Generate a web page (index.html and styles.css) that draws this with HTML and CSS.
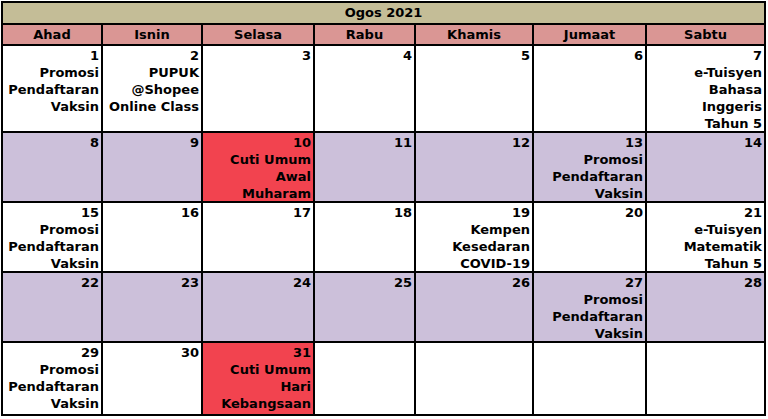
FILE: index.html
```html
<!DOCTYPE html>
<html>
<head>
<meta charset="utf-8">
<link rel="stylesheet" href="styles.css">
</head>
<body>
<div class="cal">
  <div class="title">Ogos 2021</div>
  <div class="hd">Ahad</div>
  <div class="hd">Isnin</div>
  <div class="hd">Selasa</div>
  <div class="hd">Rabu</div>
  <div class="hd">Khamis</div>
  <div class="hd">Jumaat</div>
  <div class="hd">Sabtu</div>

  <div class="c">1<br>Promosi<br>Pendaftaran<br>Vaksin</div>
  <div class="c">2<br>PUPUK<br>@Shopee<br>Online Class</div>
  <div class="c">3</div>
  <div class="c">4</div>
  <div class="c">5</div>
  <div class="c">6</div>
  <div class="c">7<br>e-Tuisyen<br>Bahasa<br>Inggeris<br>Tahun 5</div>

  <div class="c p">8</div>
  <div class="c p">9</div>
  <div class="c r">10<br>Cuti Umum<br>Awal<br>Muharam</div>
  <div class="c p">11</div>
  <div class="c p">12</div>
  <div class="c p">13<br>Promosi<br>Pendaftaran<br>Vaksin</div>
  <div class="c p">14</div>

  <div class="c">15<br>Promosi<br>Pendaftaran<br>Vaksin</div>
  <div class="c">16</div>
  <div class="c">17</div>
  <div class="c">18</div>
  <div class="c">19<br>Kempen<br>Kesedaran<br>COVID-19</div>
  <div class="c">20</div>
  <div class="c">21<br>e-Tuisyen<br>Matematik<br>Tahun 5</div>

  <div class="c p">22</div>
  <div class="c p">23</div>
  <div class="c p">24</div>
  <div class="c p">25</div>
  <div class="c p">26</div>
  <div class="c p">27<br>Promosi<br>Pendaftaran<br>Vaksin</div>
  <div class="c p">28</div>

  <div class="c">29<br>Promosi<br>Pendaftaran<br>Vaksin</div>
  <div class="c">30</div>
  <div class="c r">31<br>Cuti Umum<br>Hari<br>Kebangsaan</div>
  <div class="c"></div>
  <div class="c"></div>
  <div class="c"></div>
  <div class="c"></div>
</div>
</body>
</html>
```

FILE: styles.css
```css
html, body {
  margin: 0;
  padding: 0;
  background: #ffffff;
}
body {
  padding: 1px 0 0 1px;
  font-family: "DejaVu Sans", Verdana, sans-serif;
  font-weight: bold;
  font-size: 13px;
  color: #000;
}
.cal {
  display: grid;
  grid-template-columns: 98px 98px 110px 99px 116px 111px 117px;
  grid-template-rows: 20px 19px 85px 68px 68px 68px 71px;
  gap: 2px;
  padding: 2px;
  width: max-content;
  background: #000;
}
.title {
  grid-column: 1 / -1;
  background: #c4bd97;
  text-align: center;
  line-height: 20px;
}
.hd {
  background: #da9694;
  text-align: center;
  line-height: 19px;
}
.c {
  background: #ffffff;
  text-align: right;
  line-height: 17px;
  padding: 1px 2px 0 0;
}
.p {
  background: #ccc0da;
}
.r {
  background: #f2434f;
}
```
